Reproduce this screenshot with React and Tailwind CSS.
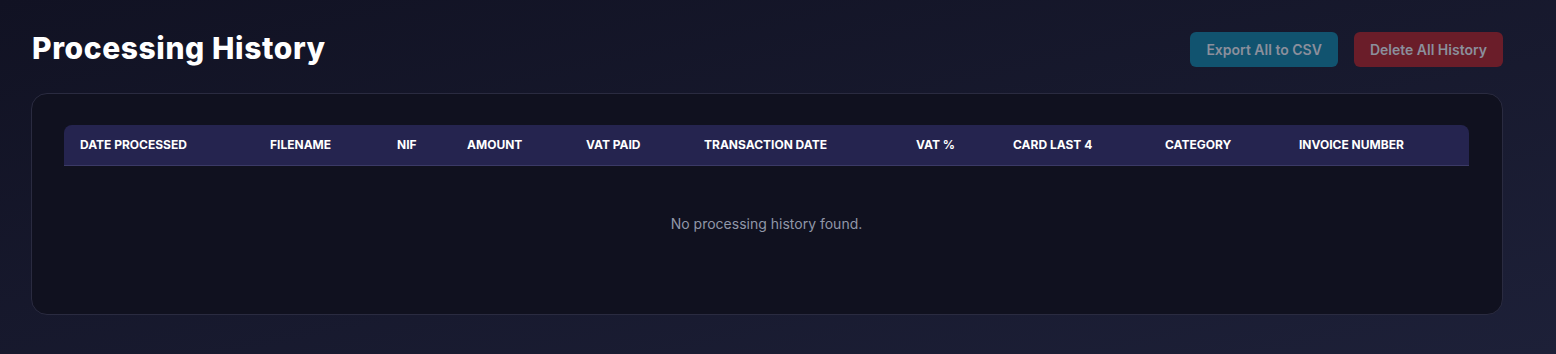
import React from "react";

const cols = [
  ["DATE PROCESSED", "w-[190px]"],
  ["FILENAME", "w-[127px]"],
  ["NIF", "w-[70px]"],
  ["AMOUNT", "w-[119px]"],
  ["VAT PAID", "w-[118px]"],
  ["TRANSACTION DATE", "w-[212px]"],
  ["VAT %", "w-[97px]"],
  ["CARD LAST 4", "w-[152px]"],
  ["CATEGORY", "w-[134px]"],
  ["INVOICE NUMBER", "flex-1"],
];

export default function App() {
  return (
    <div
      className="w-[1556px] h-[354px] bg-gradient-to-br from-[#111223] to-[#1d2038] px-8 pt-8 font-['Inter',sans-serif]"
    >
      <div className="flex items-start justify-between w-[1471px]">
        <h1 className="text-[30px] leading-[36px] font-extrabold text-white mt-[-2px] tracking-[0.6px]">
          Processing History
        </h1>
        <div className="flex gap-4">
          <button className="h-[35px] px-4 rounded-md bg-[#11536f] text-[#8b8f9c] text-sm font-semibold">
            Export All to CSV
          </button>
          <button className="h-[35px] px-4 rounded-md bg-[#6a1d29] text-[#8b8f9c] text-sm font-semibold">
            Delete All History
          </button>
        </div>
      </div>
      <div className="mt-[26px] ml-[-1px] w-[1472px] h-[222px] rounded-2xl border border-[#2a2b40] bg-[#10111f] pl-8 pr-[33px] pt-[31px]">
        <div className="flex h-[41px] items-center rounded-t-lg bg-[#25244f] border-b border-[#3b3a66]">
          {cols.map(([c, w]) => (
            <div key={c} className={`${w} pl-4 text-xs font-bold text-white`}>
              {c}
            </div>
          ))}
        </div>
        <div className="text-center text-sm text-[#9097a8] mt-[48px]">
          No processing history found.
        </div>
      </div>
    </div>
  );
}
